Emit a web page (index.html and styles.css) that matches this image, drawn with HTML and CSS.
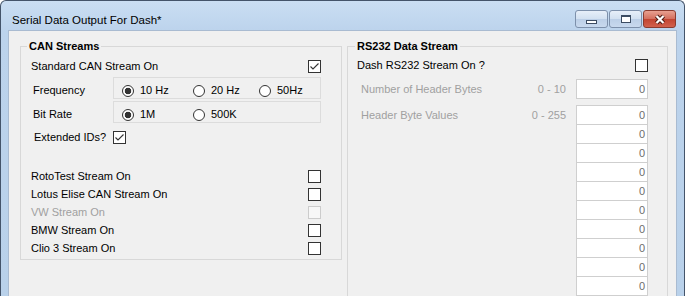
FILE: index.html
```html
<!DOCTYPE html>
<html>
<head>
	<meta charset="utf-8">
	<title>Serial Data Output For Dash*</title>
	<link rel="stylesheet" href="styles.css">
</head>
<body>
	<div class="window">
		<div class="titlebar">
			<span class="title">Serial Data Output For Dash*</span>
			<div class="caption">
				<span class="cbtn"><i class="min-glyph"></i></span>
				<span class="cbtn"><i class="max-glyph"></i></span>
				<span class="cbtn close">
					<svg width="14" height="11" viewBox="0 0 14 11">
						<path d="M3.5 2 L10.5 9 M10.5 2 L3.5 9" stroke="#4a1a12" stroke-width="4.2" fill="none"/>
						<path d="M3.5 2 L10.5 9 M10.5 2 L3.5 9" stroke="#fff" stroke-width="2.2" fill="none"/>
					</svg>
				</span>
			</div>
		</div>

		<div class="client">
			<!-- CAN -->
			<fieldset class="group can">
				<legend>CAN Streams</legend>
				<div class="can-body">
					<div class="row">
						<span>Standard CAN Stream On</span>
						<span class="chk"><svg width="11" height="11" viewBox="0 0 11 11"><path d="M1.5 5.5 L4 8 L9.5 2.5" fill="none" stroke="#333" stroke-width="1.1"/></svg></span>
					</div>
					<div class="opt-row">
						<span class="opt-label">Frequency</span>
						<div class="opt-panel">
							<span class="radio"><i class="dot on"></i>10 Hz</span>
							<span class="radio"><i class="dot"></i>20 Hz</span>
							<span class="radio"><i class="dot"></i>50Hz</span>
						</div>
					</div>
					<div class="opt-row">
						<span class="opt-label">Bit Rate</span>
						<div class="opt-panel">
							<span class="radio"><i class="dot on"></i>1M</span>
							<span class="radio"><i class="dot"></i>500K</span>
						</div>
					</div>
					<div class="ext-row">
						<span>Extended IDs?</span>
						<span class="chk"><svg width="11" height="11" viewBox="0 0 11 11"><path d="M1.5 5.5 L4 8 L9.5 2.5" fill="none" stroke="#333" stroke-width="1.1"/></svg></span>
					</div>
					<div class="stream-list">
						<div class="row"><span>RotoTest Stream On</span><span class="chk"></span></div>
						<div class="row"><span>Lotus Elise CAN Stream On</span><span class="chk"></span></div>
						<div class="row disabled"><span>VW Stream On</span><span class="chk"></span></div>
						<div class="row"><span>BMW Stream On</span><span class="chk"></span></div>
						<div class="row"><span>Clio 3 Stream On</span><span class="chk"></span></div>
					</div>
				</div>
			</fieldset>

			<!-- RS232 -->
			<fieldset class="group rs">
				<legend>RS232 Data Stream</legend>
				<div class="rs-body">
					<div class="row">
						<span>Dash RS232 Stream On ?</span>
						<span class="chk"></span>
					</div>
					<div class="field-row">
						<span class="field-label">Number of Header Bytes</span>
						<span class="range">0 - 10</span>
						<div class="stack">
							<span class="tbox">0</span>
						</div>
					</div>
					<div class="field-row values">
						<span class="field-label">Header Byte Values</span>
						<span class="range">0 - 255</span>
						<div class="stack">
							<span class="tbox">0</span>
							<span class="tbox">0</span>
							<span class="tbox">0</span>
							<span class="tbox">0</span>
							<span class="tbox">0</span>
							<span class="tbox">0</span>
							<span class="tbox">0</span>
							<span class="tbox">0</span>
							<span class="tbox">0</span>
							<span class="tbox">0</span>
						</div>
					</div>
				</div>
			</fieldset>
		</div>
	</div>
</body>
</html>
```
FILE: styles.css
```css
* {
	box-sizing: border-box;
}

html,body {
	margin: 0;
	padding: 0;
}

body {
	width: 685px;
	height: 296px;
	overflow: hidden;
	background: #fff;
	font-family: "Liberation Sans", Arial, sans-serif;
	font-size: 11px;
	color: #000;
}

/* window frame */
.window {
	width: 685px;
	height: 296px;
	border: 1px solid #44546a;
	border-bottom: 0;
	border-radius: 6px 6px 0 0;
	background: linear-gradient(#cadef3, #bcd3ec 30px, #b9d1ea);
	padding: 0 7px;
	display: flex;
	flex-direction: column;
}

.titlebar {
	height: 30px;
	margin: 0 -7px;
	padding: 9px 8px 0 11px;
	display: flex;
	align-items: flex-start;
}
.title {
	flex: 1;
	font-size: 11.5px;
	line-height: 20px;
	color: #000;
}

.caption {
	display: flex;
	gap: 1px;
}
.cbtn {
	width: 33px;
	height: 18px;
	border: 1px solid #7d90ab;
	border-radius: 3px;
	background: linear-gradient(#e7eff9, #d3e1f1 48%, #bccfe7 52%, #c8d9ee);
	display: flex;
	align-items: center;
	justify-content: center;
}
.cbtn.close {
	border-color: #8a3b2f;
	background: linear-gradient(#e8a090, #d4705f 48%, #c24532 52%, #d2614d);
}
.min-glyph {
	width: 11px;
	height: 4px;
	margin-top: 6px;
	background: #fff;
	border: 1px solid #3c4c62;
}
.max-glyph {
	width: 10px;
	height: 8px;
	background: #fff;
	border: 1px solid #3c4c62;
	border-top-width: 2px;
}

/* client area */
.client {
	flex: 1;
	background: #f0f0f0;
	border: 1px solid #a9bbd1;
	border-bottom: 0;
	padding: 9px 0 0 11px;
	display: flex;
	align-items: flex-start;
	gap: 5px;
}

.group {
	margin: 0;
	padding: 0;
	min-width: 0;
	border: 1px solid #d8d8d8;
}
.group legend {
	margin-left: 6px;
	padding: 0 2px;
	font-weight: bold;
	line-height: 13px;
}
.can {
	width: 322px;
}
.rs {
	width: 321px;
	height: 320px;
}
.rs legend {
	margin-left: 7px;
}

.can-body {
	padding: 4px 20px 2px 10px;
}
.rs-body {
	padding: 3px 19px 0 9px;
}

.row {
	height: 18px;
	display: flex;
	align-items: center;
	justify-content: space-between;
}
.row.disabled {
	color: #a0a0a0;
}

.chk {
	width: 13px;
	height: 13px;
	border: 1px solid #333;
	background: #fff;
	display: flex;
	align-items: center;
	justify-content: center;
}
.row.disabled .chk {
	border-color: #ccc;
	background: #f7f7f7;
}

.opt-row {
	margin-top: 2px;
	padding-left: 2px;
	display: flex;
}
.opt-label {
	width: 80px;
	padding-top: 7px;
	line-height: 13px;
}
.opt-panel {
	width: 208px;
	height: 22px;
	border: 1px solid #dcdcdc;
	padding: 6px 0 0 8px;
	display: flex;
}
.radio {
	height: 13px;
	line-height: 13px;
	display: flex;
	align-items: center;
	gap: 6px;
}
.radio:nth-child(1) {
	width: 71px;
}
.radio:nth-child(2) {
	width: 66px;
}
.dot {
	width: 12px;
	height: 12px;
	border: 1px solid #333;
	border-radius: 50%;
	background: #fff;
}
.dot.on {
	background: radial-gradient(circle, #333 3px, #fff 3.6px);
}

.ext-row {
	margin-top: 6px;
	height: 16px;
	padding-left: 3px;
	display: flex;
	align-items: center;
	gap: 7px;
}

.stream-list {
	margin-top: 22px;
}

/* RS232 side */
.field-row {
	margin-top: 5px;
	display: flex;
	align-items: flex-start;
	color: #a0a0a0;
}
.field-row.values {
	margin-top: 6px;
}
.field-label {
	flex: 1;
	padding-left: 4px;
	line-height: 20px;
}
.range {
	margin-right: 10px;
	line-height: 20px;
}
.stack {
	width: 72px;
	display: flex;
	flex-direction: column;
}
.tbox {
	height: 20px;
	border: 1px solid #cfcfcf;
	background: #fff;
	color: #6d6d6d;
	text-align: right;
	padding-right: 2px;
	line-height: 18px;
}
.tbox + .tbox {
	margin-top: -1px;
}
```
